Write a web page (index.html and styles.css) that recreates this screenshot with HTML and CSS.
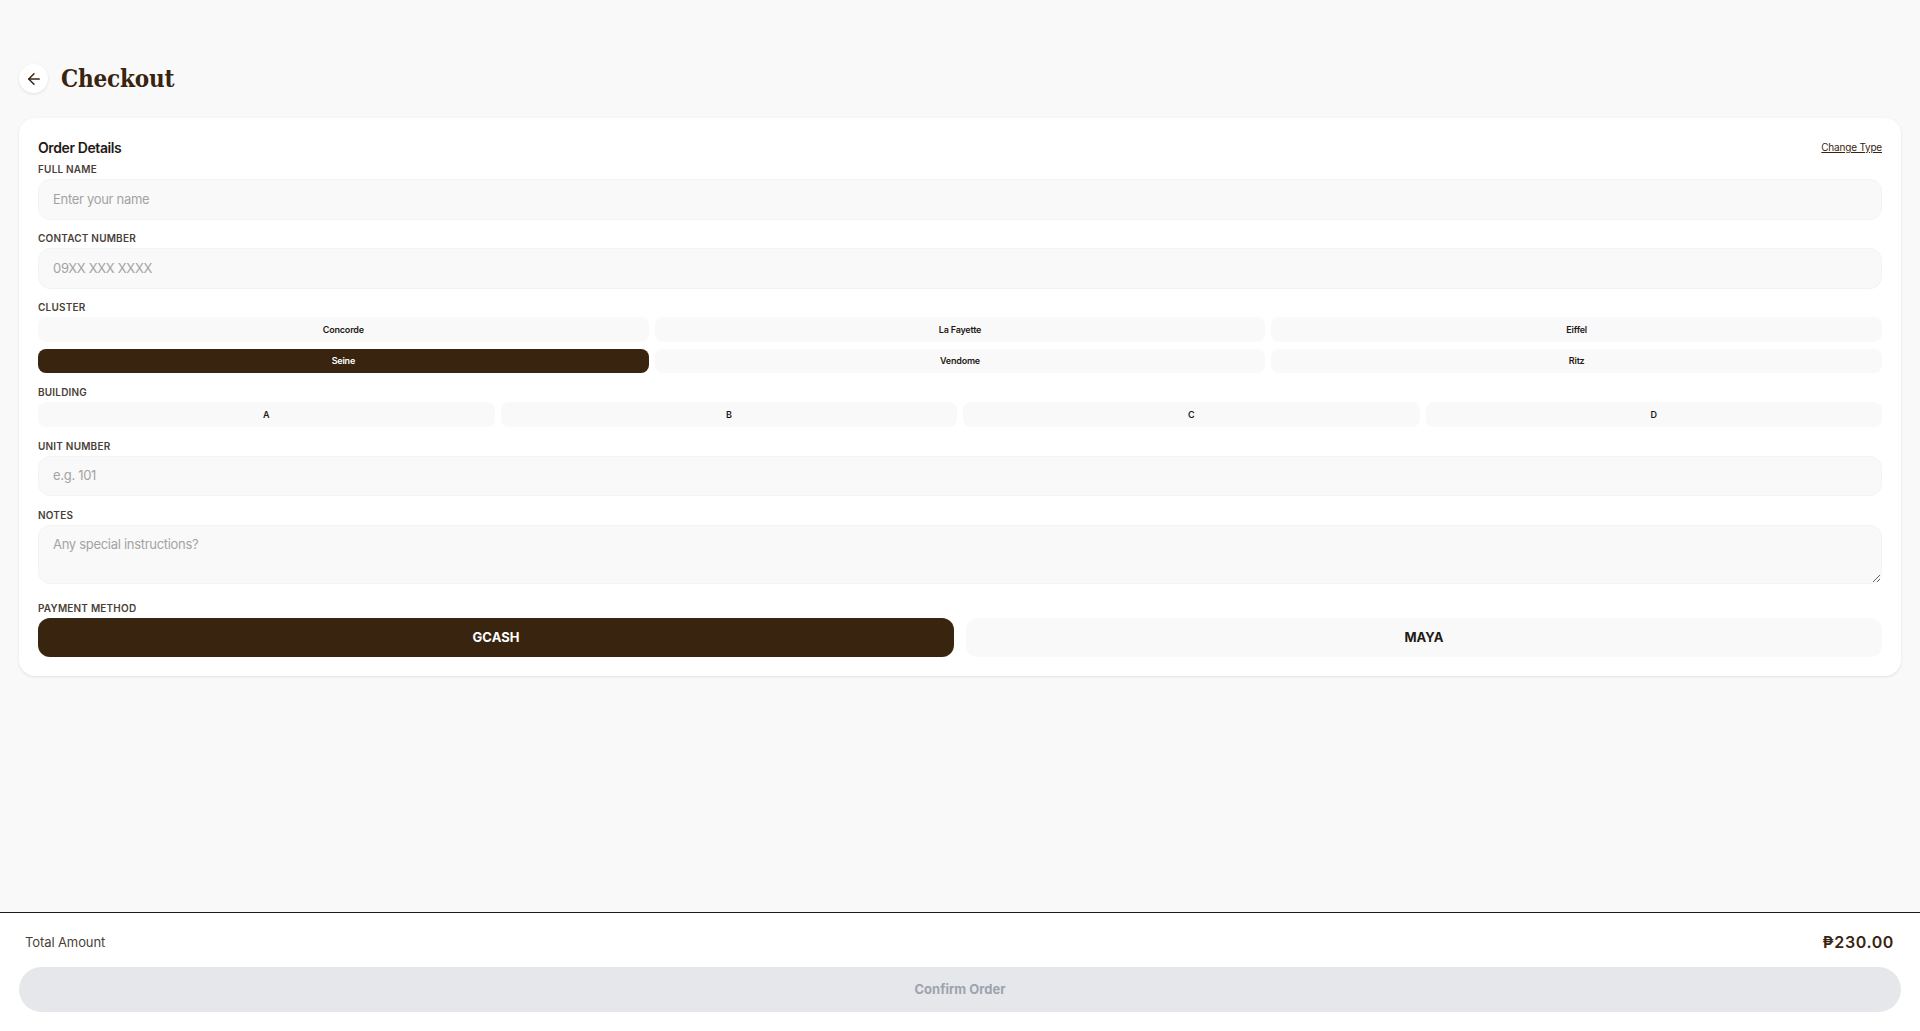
FILE: index.html
```html
<!DOCTYPE html>
<html lang="en">
<head>
    <meta charset="UTF-8">
    <meta name="viewport" content="width=device-width, initial-scale=1.0">
    <title>Checkout</title>
    <link rel="stylesheet" href="styles.css">
</head>
<body>
    <main class="page">
        <div class="page-header">
            <button class="back-btn" type="button" aria-label="Back">
                <svg viewBox="0 0 24 24" width="18" height="18" fill="none" stroke="currentColor" stroke-width="2" stroke-linecap="round" stroke-linejoin="round">
                    <path d="M19 12H5"/>
                    <path d="M12 19l-7-7 7-7"/>
                </svg>
            </button>
            <h1 class="page-title">Checkout</h1>
        </div>

        <form class="card">
            <div class="card-head">
                <h2 class="card-title">Order Details</h2>
                <a class="change-link" href="#">Change Type</a>
            </div>

            <div class="form-group">
                <label class="field-label">FULL NAME</label>
                <input class="field" type="text" placeholder="Enter your name">
            </div>

            <div class="form-group">
                <label class="field-label">CONTACT NUMBER</label>
                <input class="field" type="text" placeholder="09XX XXX XXXX">
            </div>

            <div class="form-group spaced">
                <label class="field-label">CLUSTER</label>
                <div class="choice-grid cols-3">
                    <button class="choice" type="button">Concorde</button>
                    <button class="choice" type="button">La Fayette</button>
                    <button class="choice" type="button">Eiffel</button>
                    <button class="choice active" type="button">Seine</button>
                    <button class="choice" type="button">Vendome</button>
                    <button class="choice" type="button">Ritz</button>
                </div>
            </div>

            <div class="form-group spaced">
                <label class="field-label">BUILDING</label>
                <div class="choice-grid cols-4">
                    <button class="choice" type="button">A</button>
                    <button class="choice" type="button">B</button>
                    <button class="choice" type="button">C</button>
                    <button class="choice" type="button">D</button>
                </div>
            </div>

            <div class="form-group spaced">
                <label class="field-label">UNIT NUMBER</label>
                <input class="field unit" type="text" placeholder="e.g. 101">
            </div>

            <div class="form-group">
                <label class="field-label">NOTES</label>
                <textarea class="field notes" placeholder="Any special instructions?"></textarea>
            </div>

            <div class="form-group">
                <label class="field-label">PAYMENT METHOD</label>
                <div class="pay-row">
                    <button class="pay active" type="button">GCASH</button>
                    <button class="pay" type="button">MAYA</button>
                </div>
            </div>
        </form>
    </main>

    <footer class="footer">
        <div class="total-row">
            <span class="total-label">Total Amount</span>
            <span class="total-value">₱230.00</span>
        </div>
        <button class="confirm-btn" type="button" disabled>Confirm Order</button>
    </footer>
</body>
</html>
```
FILE: styles.css
```css
* {
    box-sizing: border-box;
}
body {
    font-family: Inter, "Noto Sans", sans-serif;
    background: #f9f9f9;
    color: #392410;
    margin: 0;
    height: 100vh;
    display: flex;
    flex-direction: column;
}
.page {
    flex: 1;
    padding: 64px 19px 0;
}
.page-header {
    display: flex;
    align-items: center;
    gap: 13px;
    height: 29px;
    margin-bottom: 25px;
}
.back-btn {
    width: 29px;
    height: 29px;
    padding: 0;
    border: none;
    border-radius: 50%;
    background: #fff;
    color: #392410;
    box-shadow: 0 1px 3px rgba(0, 0, 0, 0.1);
    display: flex;
    align-items: center;
    justify-content: center;
}
.page-title {
    margin: 0;
    font-family: "DejaVu Serif Condensed", "DejaVu Serif", serif;
    font-size: 24px;
    font-weight: 700;
    letter-spacing: -0.2px;
    color: #392410;
}
.card {
    background: #fff;
    border-radius: 16px;
    padding: 19px;
    box-shadow: 0 1px 3px rgba(0, 0, 0, 0.1);
}
.card-head {
    display: flex;
    justify-content: space-between;
    align-items: center;
    height: 20px;
    margin-bottom: 5px;
}
.card-title {
    margin: 0;
    font-size: 14px;
    font-weight: 600;
    letter-spacing: -0.4px;
    line-height: 19px;
    color: #1f1a17;
}
.change-link {
    font-size: 10px;
    letter-spacing: -0.2px;
    color: #392410;
}
.form-group {
    margin-bottom: 11px;
}
.form-group.spaced {
    margin-bottom: 12px;
}
.form-group:last-child {
    margin-bottom: 0;
}
.field-label {
    display: block;
    height: 14px;
    line-height: 14px;
    margin-bottom: 3px;
    font-size: 10px;
    font-weight: 600;
    letter-spacing: 0.2px;
    color: #4a3f38;
}
.field {
    display: block;
    width: 100%;
    height: 41px;
    padding: 0 14px 2px;
    border: 1px solid #f3f3f3;
    border-radius: 12px;
    background: #f9f9f9;
    font-family: inherit;
    font-size: 13px;
    letter-spacing: -0.3px;
    outline: none;
}
.field::placeholder {
    color: #a3a3a3;
}
.unit {
    height: 40px;
}
.notes {
    height: 59px;
    padding-top: 10px;
    margin-bottom: 17px;
}
.choice-grid {
    display: grid;
    gap: 7px 6px;
}
.cols-3 {
    grid-template-columns: repeat(3, 1fr);
}
.cols-3 .choice {
    height: 24.5px;
}
.cols-4 {
    grid-template-columns: repeat(4, 1fr);
}
.choice {
    height: 25px;
    padding: 0;
    border: none;
    border-radius: 8px;
    background: #f9f9f9;
    font-family: inherit;
    font-size: 9px;
    font-weight: 600;
    letter-spacing: -0.2px;
    color: #1f1a17;
}
.choice.active {
    background: #392410;
    color: #fff;
}
.pay-row {
    display: grid;
    grid-template-columns: 1fr 1fr;
    gap: 12px;
}
.pay {
    height: 39px;
    padding: 0 0 2px;
    border: none;
    border-radius: 12px;
    background: #f9f9f9;
    font-family: inherit;
    font-size: 13px;
    font-weight: 700;
    color: #1f1a17;
}
.pay.active {
    background: #392410;
    color: #fff;
}
.footer {
    height: 119px;
    padding: 0 19px;
    background: #fff;
    border-top: 1px solid #1f1a17;
}
.total-row {
    display: flex;
    justify-content: space-between;
    align-items: center;
    height: 54px;
    padding: 4px 7px 0 6px;
}
.total-label {
    font-size: 13px;
    letter-spacing: -0.1px;
    color: #4a3f38;
}
.total-value {
    font-size: 16px;
    font-weight: 600;
    letter-spacing: 0.6px;
    color: #392410;
}
.confirm-btn {
    display: block;
    width: 100%;
    height: 45px;
    padding: 0 0 1px;
    border: none;
    border-radius: 23px;
    background: #e5e7eb;
    color: #9ca3af;
    font-family: inherit;
    font-size: 13px;
    font-weight: 700;
}
```
